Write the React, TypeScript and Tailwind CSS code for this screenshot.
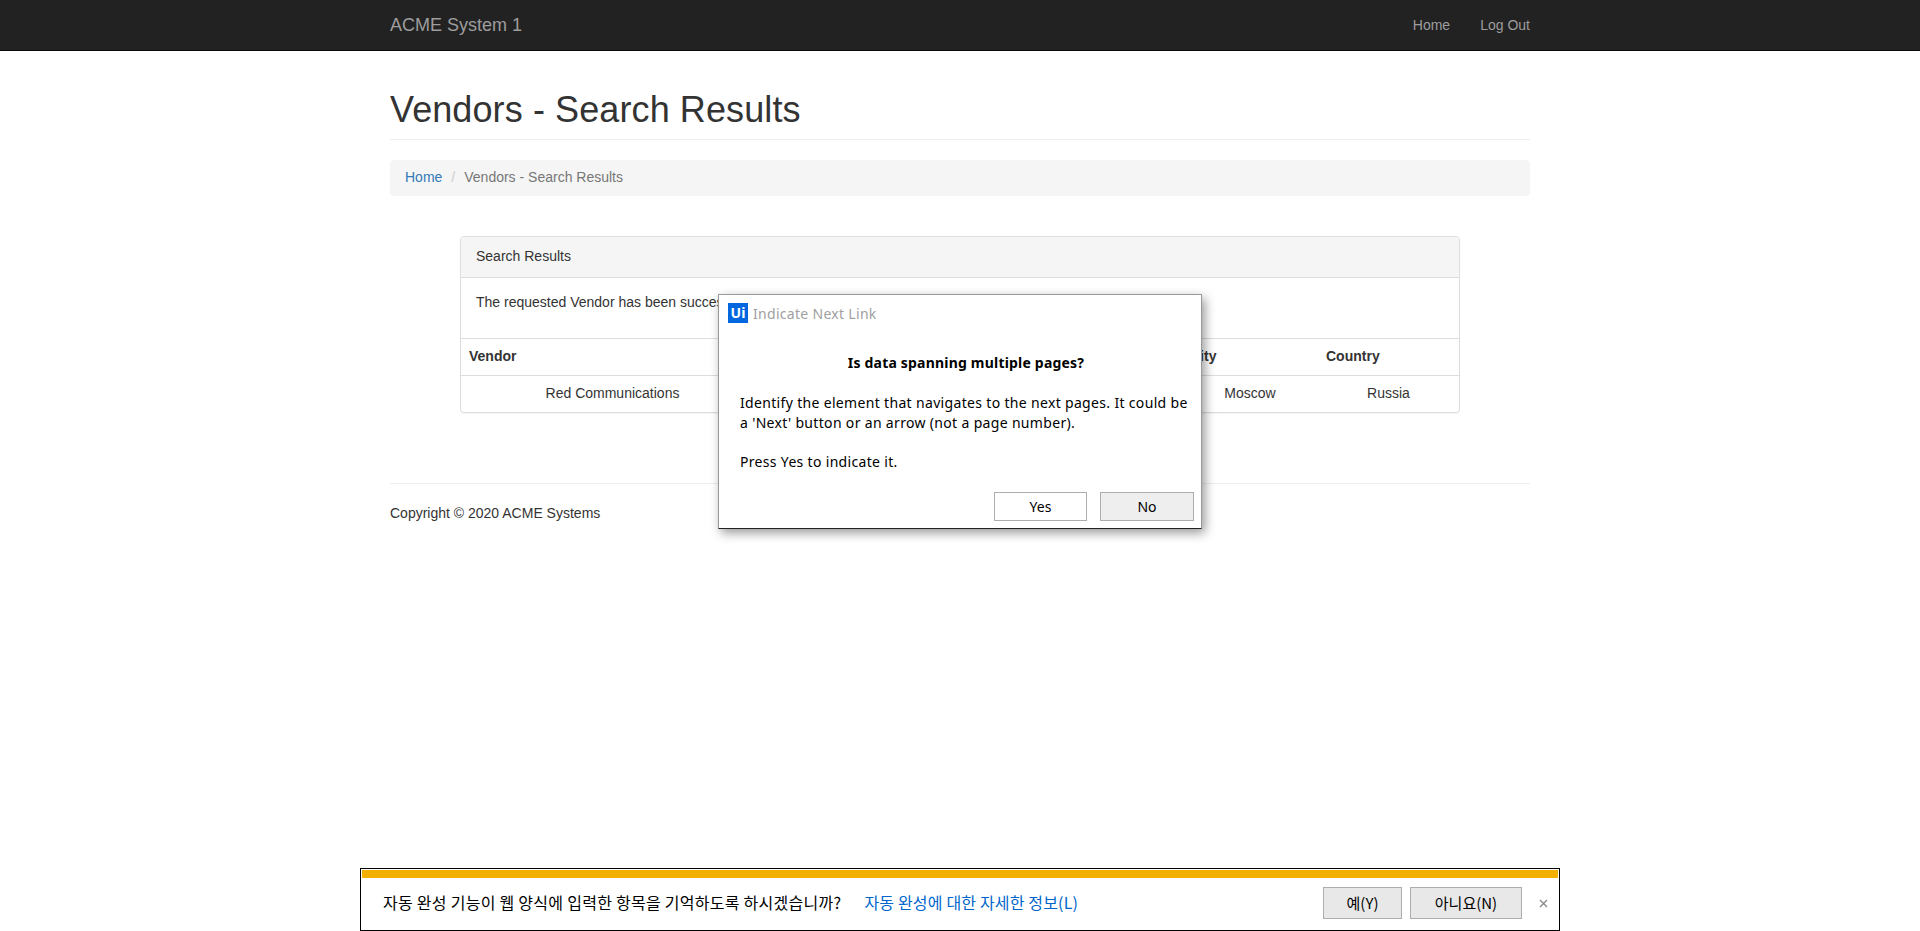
const SANS = "font-['Liberation_Sans',Arial,sans-serif]";
const UI = "font-['Noto_Sans','Noto_Sans_CJK_KR',sans-serif]";
const KR = "font-['Noto_Sans_CJK_KR','Liberation_Sans',sans-serif]";

function Navbar() {
  return (
    <nav className="h-[51px] border-b border-[#080808] bg-[#222222]">
      <div className="mx-auto flex h-[50px] w-[1170px] items-center justify-between px-[15px]">
        <span className="text-[18px] text-[#9d9d9d]">ACME System 1</span>
        <div className="flex gap-[30px] text-[14px] text-[#9d9d9d]">
          <a>Home</a>
          <a>Log Out</a>
        </div>
      </div>
    </nav>
  );
}

function ResultsPanel() {
  return (
    <div className="mx-[70px] mt-[40px] rounded-[4px] border border-[#dddddd] shadow-[0_1px_1px_rgba(0,0,0,0.05)]">
      <div className="h-[41px] rounded-t-[3px] border-b border-[#dddddd] bg-[#f5f5f5] px-[15px] pb-[11px] pt-[9px] leading-[20px]">
        Search Results
      </div>
      <div className="h-[60px] px-[15px] pb-[16px] pt-[14px] leading-[20px]">
        <p>The requested Vendor has been successfully found.</p>
      </div>
      <table className="w-full table-fixed border-collapse">
        <colgroup>
          <col className="w-[303px]" />
          <col />
          <col className="w-[136px]" />
          <col className="w-[141px]" />
        </colgroup>
        <thead>
          <tr className="border-t border-[#dddddd]">
            <th className="px-[8px] pb-[9px] pt-[7px] text-left font-bold leading-[20px]">Vendor</th>
            <th className="p-[8px]" />
            <th className="px-[8px] pb-[9px] pt-[7px] text-left font-bold leading-[20px]">City</th>
            <th className="px-[8px] pb-[9px] pt-[7px] text-left font-bold leading-[20px]">Country</th>
          </tr>
        </thead>
        <tbody>
          <tr className="border-t border-[#dddddd] text-center">
            <td className="px-[8px] pb-[9px] pt-[7px] leading-[20px]">Red Communications</td>
            <td className="p-[8px]" />
            <td className="px-[8px] pb-[9px] pt-[7px] leading-[20px]">Moscow</td>
            <td className="px-[8px] pb-[9px] pt-[7px] leading-[20px]">Russia</td>
          </tr>
        </tbody>
      </table>
    </div>
  );
}

function NextLinkDialog() {
  return (
    <div
      className={`absolute left-[718px] top-[294px] h-[235px] w-[484px] border border-[#999999] border-b-[#222222] bg-white text-[14px] leading-[20px] text-black shadow-[3px_4px_10px_rgba(0,0,0,0.4)] ${UI}`}
    >
      <div className="ml-[9px] mt-[8px] flex items-center gap-[5px]">
        <div className="flex h-[20px] w-[20px] items-center justify-center bg-[#0067df] text-[14px] font-bold text-white">
          Ui
        </div>
        <span className="relative top-[1px] tracking-[0.3px] text-[#a0a0a0]">Indicate Next Link</span>
      </div>
      <p className="ml-[12px] mt-[30px] text-center font-bold tracking-[0.2px]">Is data spanning multiple pages?</p>
      <p className="ml-[21px] mt-[20px] w-[455px] tracking-[0.33px]">
        Identify the element that navigates to the next pages. It could be a 'Next' button or an arrow (not a page number).
      </p>
      <p className="ml-[21px] mt-[19px] tracking-[0.32px]">Press Yes to indicate it.</p>
      <div className="ml-[275px] mt-[20px] flex gap-[13px]">
        <button className="h-[29px] w-[93px] border border-[#adadad] bg-white">Yes</button>
        <button className="h-[29px] w-[94px] border border-[#adadad] bg-[#eeeeee]">No</button>
      </div>
    </div>
  );
}

function AutocompleteBar() {
  return (
    <div className={`absolute left-[360px] top-[868px] h-[63px] w-[1200px] border border-black bg-white p-[1px] ${KR}`}>
      <div className="h-[8px] bg-[#f4b000]" />
      <div className="flex h-[50px] items-center pl-[21px] pr-[10px] text-[16px] text-black">
        <span className="relative -top-[1px] tracking-[0.27px]">자동 완성 기능이 웹 양식에 입력한 항목을 기억하도록 하시겠습니까?</span>
        <a className="relative -top-[1px] ml-[23px] tracking-[0.17px] text-[#0066cc]">자동 완성에 대한 자세한 정보(L)</a>
        <button className="ml-auto h-[32px] w-[79px] border border-[#adadad] bg-[#e8e8e8] text-[15px]">예(Y)</button>
        <button className="ml-[8px] h-[32px] w-[112px] border border-[#adadad] bg-[#e8e8e8] text-[15px]">아니요(N)</button>
        <svg className="ml-[17px]" width="9" height="9" viewBox="0 0 9 9" fill="none" stroke="#8a8a8a" strokeWidth="1.4">
          <path d="M1 1l7 7M8 1L1 8" />
        </svg>
      </div>
    </div>
  );
}

export default function App() {
  return (
    <div className={`relative h-[931px] w-[1920px] overflow-hidden bg-white text-[14px] text-[#333333] ${SANS}`}>
      <Navbar />
      <main className="mx-auto w-[1170px] px-[15px]">
        <div className="mt-[39px] border-b border-[#eeeeee] pb-[9px]">
          <h1 className="text-[36px] font-medium leading-[40px] tracking-[0.1px] text-[#333333]">Vendors - Search Results</h1>
        </div>
        <div className="mt-[20px] h-[36px] rounded-[4px] bg-[#f5f5f5] px-[15px] pb-[9px] pt-[7px] leading-[20px]">
          <a className="text-[#337ab7]">Home</a>
          <span className="px-[9px] text-[#cccccc]">/</span>
          <span className="text-[#777777]">Vendors - Search Results</span>
        </div>
        <ResultsPanel />
        <footer className="mt-[70px] border-t border-[#eeeeee] pt-[19px] leading-[20px]">
          Copyright © 2020 ACME Systems
        </footer>
      </main>
      <NextLinkDialog />
      <AutocompleteBar />
    </div>
  );
}
